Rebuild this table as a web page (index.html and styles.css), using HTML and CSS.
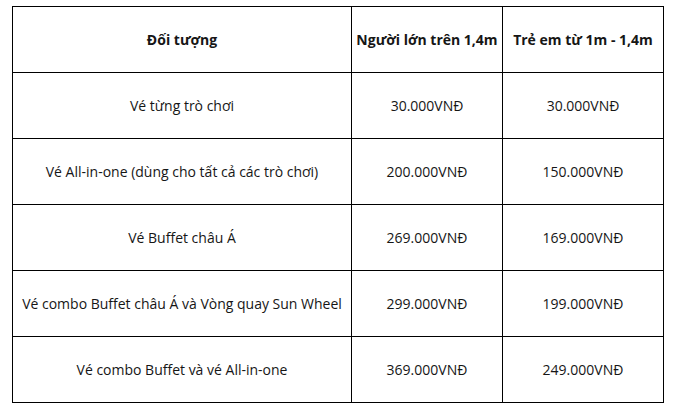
FILE: index.html
```html
<!DOCTYPE html>
<html lang="vi">
<head>
<meta charset="utf-8">
<link rel="stylesheet" href="styles.css">
</head>
<body>
<table class="price-table">
  <colgroup>
    <col class="c1">
    <col class="c2">
    <col class="c3">
  </colgroup>
  <thead>
    <tr>
      <th>Đối tượng</th>
      <th>Người lớn trên 1,4m</th>
      <th>Trẻ em từ 1m - 1,4m</th>
    </tr>
  </thead>
  <tbody>
    <tr><td>Vé từng trò chơi</td><td>30.000VNĐ</td><td>30.000VNĐ</td></tr>
    <tr><td>Vé All-in-one (dùng cho tất cả các trò chơi)</td><td>200.000VNĐ</td><td>150.000VNĐ</td></tr>
    <tr><td>Vé Buffet châu Á</td><td>269.000VNĐ</td><td>169.000VNĐ</td></tr>
    <tr><td>Vé combo Buffet châu Á và Vòng quay Sun Wheel</td><td>299.000VNĐ</td><td>199.000VNĐ</td></tr>
    <tr><td>Vé combo Buffet và vé All-in-one</td><td>369.000VNĐ</td><td>249.000VNĐ</td></tr>
  </tbody>
</table>
</body>
</html>
```
FILE: styles.css
```css
html, body {
  margin: 0;
  padding: 0;
  background: #ffffff;
}
body {
  padding: 6px 0 0 12px;
  font-family: "Open Sans", "Noto Sans", sans-serif;
  font-size: 14px;
  color: #161616;
}
.price-table {
  border-collapse: collapse;
  table-layout: fixed;
  width: 651px;
}
.c1 { width: 339px; }
.c2 { width: 151px; }
.c3 { width: 161px; }
.price-table th,
.price-table td {
  border: 1.5px solid #000;
  height: 65px;
  padding: 0;
  text-align: center;
  vertical-align: middle;
  white-space: nowrap;
}
.price-table th {
  font-weight: 700;
}
.price-table td {
  font-weight: 400;
}
```
